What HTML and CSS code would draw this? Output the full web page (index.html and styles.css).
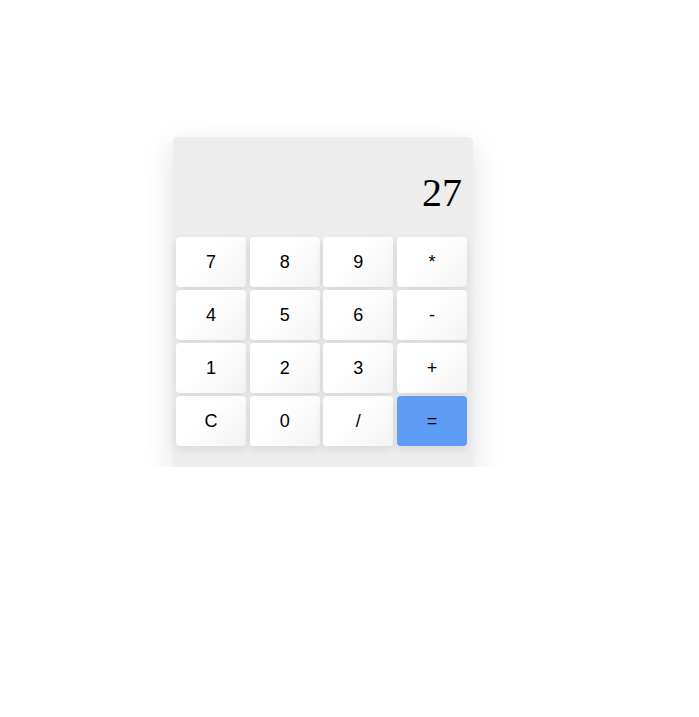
FILE: index.html
```html
<!DOCTYPE html>
<html>
<head>
<meta charset="utf-8">
<link rel="stylesheet" href="styles.css">
</head>
<body>
<div class="calc">
  <div class="display">27</div>
  <div class="keys">
    <button class="key">7</button>
    <button class="key">8</button>
    <button class="key">9</button>
    <button class="key">*</button>
    <button class="key">4</button>
    <button class="key">5</button>
    <button class="key">6</button>
    <button class="key">-</button>
    <button class="key">1</button>
    <button class="key">2</button>
    <button class="key">3</button>
    <button class="key">+</button>
    <button class="key">C</button>
    <button class="key">0</button>
    <button class="key">/</button>
    <button class="key equals">=</button>
  </div>
</div>
</body>
</html>
```
FILE: styles.css
```css
html, body {
  margin: 0;
  padding: 0;
  background: #ffffff;
}
body {
  padding: 137px 0 0 173px;
}
.calc {
  width: 300px;
  background: #ededed;
  border-radius: 5px;
  box-shadow: 0 10px 30px rgba(0, 0, 0, 0.13);
  padding-bottom: 21px;
}
.display {
  height: 100px;
  box-sizing: border-box;
  padding: 33px 11px 0 0;
  text-align: right;
  font-family: "Liberation Serif", serif;
  font-size: 40px;
  line-height: 46px;
  color: #000;
}
.keys {
  display: grid;
  grid-template-columns: repeat(4, 70px);
  column-gap: 3.67px;
  row-gap: 3px;
  padding-left: 3px;
}
.key {
  height: 50px;
  border: none;
  border-radius: 4px;
  background: linear-gradient(135deg, #ffffff 40%, #f3f3f3 100%);
  box-shadow: 0 3px 8px rgba(0, 0, 0, 0.09);
  font-family: "Liberation Sans", Arial, sans-serif;
  font-size: 18px;
  color: #000;
  padding: 0;
}
.key.equals {
  background: #5f9cf6;
}
```
